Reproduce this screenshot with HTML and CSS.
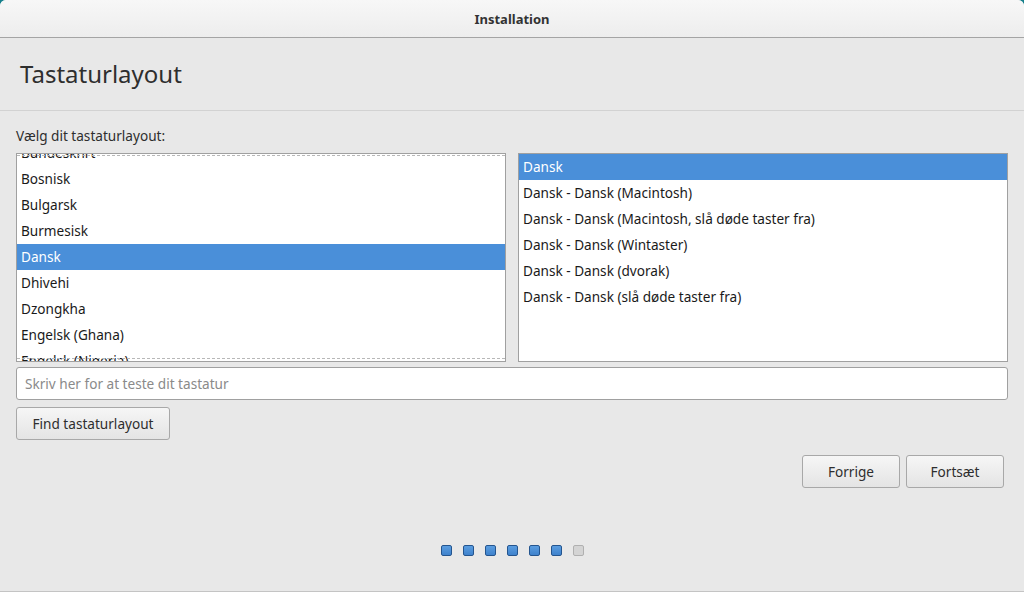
FILE: index.html
```html
<!DOCTYPE html>
<html lang="da">
<head>
<meta charset="utf-8">
<title>Installation</title>
<link rel="stylesheet" href="styles.css">
</head>
<body>
<div class="window">
  <header class="titlebar">Installation</header>
  <div class="pagehead"><h1>Tastaturlayout</h1></div>
  <main class="content">
    <div class="label">Vælg dit tastaturlayout:</div>
    <div class="lists">
      <div class="list left scrolled">
        <div class="rows">
          <div class="row">Bundeskhrt</div>
          <div class="row">Bosnisk</div>
          <div class="row">Bulgarsk</div>
          <div class="row">Burmesisk</div>
          <div class="row sel">Dansk</div>
          <div class="row">Dhivehi</div>
          <div class="row">Dzongkha</div>
          <div class="row">Engelsk (Ghana)</div>
          <div class="row">Engelsk (Nigeria)</div>
        </div>
        <div class="dash top"></div>
        <div class="dash bottom"></div>
      </div>
      <div class="list right">
        <div class="rows">
          <div class="row sel">Dansk</div>
          <div class="row">Dansk - Dansk (Macintosh)</div>
          <div class="row">Dansk - Dansk (Macintosh, slå døde taster fra)</div>
          <div class="row">Dansk - Dansk (Wintaster)</div>
          <div class="row">Dansk - Dansk (dvorak)</div>
          <div class="row">Dansk - Dansk (slå døde taster fra)</div>
        </div>
      </div>
    </div>
    <input class="test" type="text" placeholder="Skriv her for at teste dit tastatur">
    <div class="findrow"><button class="btn find">Find tastaturlayout</button></div>
    <div class="nav">
      <button class="btn navbtn">Forrige</button>
      <button class="btn navbtn">Fortsæt</button>
    </div>
    <div class="dots">
      <span class="dot on"></span><span class="dot on"></span><span class="dot on"></span><span class="dot on"></span><span class="dot on"></span><span class="dot on"></span><span class="dot"></span>
    </div>
  </main>
</div>
</body>
</html>
```
FILE: styles.css
```css
* { box-sizing: border-box; }
html, body { margin: 0; padding: 0; }
body {
  width: 1024px; height: 592px; overflow: hidden;
  background: #16808c;
  font-family: "Noto Sans", "Open Sans", sans-serif;
  font-size: 13.6px;
  color: #1a1a1a;
}
.window {
  height: 592px;
  background: #e8e8e8;
  border-radius: 6px 6px 0 0;
  overflow: hidden;
  display: flex; flex-direction: column;
  border-bottom: 1px solid #c4c4c4;
}
.titlebar {
  height: 38px;
  flex: none;
  background: linear-gradient(#f7f7f7, #ededed);
  border-bottom: 1px solid #a4a4a4;
  display: flex; align-items: center; justify-content: center;
  font-weight: bold; font-size: 13px; color: #333;
}
.pagehead {
  height: 73px; flex: none;
  border-bottom: 1px solid #d2d2d2;
  display: flex; align-items: center;
  padding-left: 20px;
}
.pagehead h1 {
  margin: 0; font-weight: 400; font-size: 24px; color: #2e2e2e;
  position: relative; top: -1px;
}
.content { padding: 16px 16px 0 16px; flex: 1; display: flex; flex-direction: column; }
.label { height: 18px; line-height: 18px; color: #2e2e2e; margin-bottom: 8px; }
.lists { display: flex; gap: 12px; height: 209px; }
.list {
  position: relative;
  background: #fff;
  border: 1px solid #a0a0a0;
  overflow: hidden;
}
.list.left { width: 490px; flex: none; }
.list.right { flex: 1; }
.list.scrolled .rows { margin-top: -14px; }
.row {
  height: 26px; line-height: 26px; padding-left: 4px;
  white-space: nowrap; color: #1a1a1a;
}
.row.sel { background: #4a8fd9; color: #fff; }
.dash { position: absolute; left: 0; right: 0; height: 0; border-top: 1px dashed #b8b8b8; }
.dash.top { top: 1px; }
.dash.bottom { bottom: 2px; }
.test {
  margin-top: 5px;
  width: 992px; height: 33px;
  border: 1px solid #a0a0a0; border-radius: 3px;
  background: #fff;
  font: inherit; padding: 0 8px;
  outline: none;
}
.test::placeholder { color: #8a8a8a; }
.findrow { margin-top: 7px; }
.btn {
  font: inherit; color: #2e2e2e;
  height: 33px;
  border: 1px solid #a8a8a8; border-radius: 3px;
  background: linear-gradient(#f6f6f6, #e4e4e4);
  padding: 0 12px;
}
.find { width: 154px; }
.nav { display: flex; justify-content: flex-end; gap: 6px; margin-top: 15px; padding-right: 4px; }
.navbtn { width: 98px; }
.dots { display: flex; justify-content: center; gap: 11px; margin-top: 57px; }
.dot {
  width: 11px; height: 11px; border-radius: 2px;
  background: linear-gradient(#5a9de0, #3f82cc);
  border: 1px solid #24558f;
}
.dot:not(.on) { background: #d4d4d4; border-color: #b0b0b0; }
```
